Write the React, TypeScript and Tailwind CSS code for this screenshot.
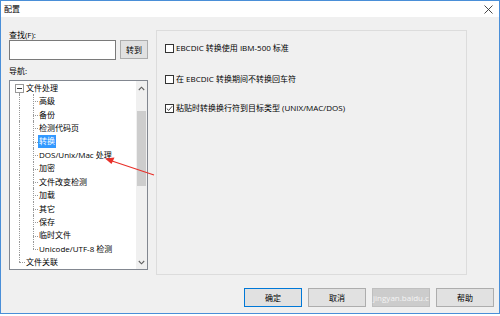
import React from "react";

const children = [
  "高级",
  "备份",
  "检测代码页",
  "转换",
  "DOS/Unix/Mac 处理",
  "加密",
  "文件改变检测",
  "加载",
  "其它",
  "保存",
  "临时文件",
  "Unicode/UTF-8 检测",
];

function Checkbox({ checked }: { checked?: boolean }) {
  return (
    <span className="w-[9px] h-[9px] border border-[#333] bg-white flex items-center justify-center shrink-0">
      {checked && (
        <svg width="7" height="7" viewBox="0 0 7 7">
          <path d="M0.8 3.6 L2.7 5.4 L6.2 1.2" fill="none" stroke="#333" strokeWidth="0.9" />
        </svg>
      )}
    </span>
  );
}

function Btn({ label, focus, dim }: { label: string; focus?: boolean; dim?: boolean }) {
  return (
    <div
      className={`w-[58px] h-[19px] flex items-center justify-center border ${
        focus
          ? "border-[#0078d7] bg-[#e1e1e1]"
          : dim
          ? "border-[#bfbfbf] bg-[#cccccc] text-[#f4f4f4]"
          : "border-[#adadad] bg-[#e1e1e1]"
      }`}
    >
      {label}
    </div>
  );
}

export default function App() {
  return (
    <div className="w-[500px] h-[316px] bg-white relative overflow-hidden font-['Open_Sans','Noto_Sans_CJK_SC',sans-serif] text-[8px] leading-none text-black">
      <div className="h-[314px] border border-[#4a8fd8] flex flex-col">
        {/* Title bar */}
        <div className="h-[16px] bg-white flex items-center justify-between pl-[3px] pr-[6px]">
          <span>配置</span>
          <svg width="9" height="9" viewBox="0 0 9 9">
            <path d="M0.5 0.5 L8.5 8.5 M8.5 0.5 L0.5 8.5" stroke="#333" strokeWidth="0.9" />
          </svg>
        </div>

        {/* Body */}
        <div className="flex-1 bg-[#f0f0f0] flex flex-col">
          <div className="flex pt-[13px] pl-[8px]">
            {/* Left column */}
            <div className="w-[139px] flex flex-col">
              <div className="h-[10px] flex items-center">查找(F):</div>
              <div className="flex gap-[4px]">
                <div className="w-[107px] h-[20px] bg-white border border-[#7a7a7a]" />
                <div className="w-[28px] h-[19px] bg-[#e1e1e1] border border-[#adadad] flex items-center justify-center">
                  转到
                </div>
              </div>
              <div className="h-[10px] mt-[6px] flex items-center">导航:</div>
              <div className="mt-[4px] h-[190px] bg-white border border-[#828790] flex">
                <div className="flex-1 flex flex-col">
                  <div className="h-[13.5px] relative flex items-center">
                    <span className="absolute left-[5px] top-[2.5px] w-[9px] h-[9px] border border-[#999] bg-white flex items-center justify-center">
                      <span className="w-[5px] h-px bg-[#333]" />
                    </span>
                    <span className="absolute left-[9px] top-[11.5px] bottom-0 border-l border-dotted border-[#999]" />
                    <span className="ml-[16px]">文件处理</span>
                  </div>
                  {children.map((c, i) => {
                    const last = i === children.length - 1;
                    const sel = c === "转换";
                    return (
                      <div key={c} className="h-[13.5px] relative flex items-center">
                        <span className="absolute left-[9px] top-0 bottom-0 border-l border-dotted border-[#999]" />
                        <span
                          className={`absolute left-[23px] top-0 border-l border-dotted border-[#999] ${
                            last ? "h-[7px]" : "bottom-0"
                          }`}
                        />
                        <span className="absolute left-[23px] w-[5px] top-[7px] border-t border-dotted border-[#999]" />
                        <span
                          className={`ml-[28px] px-[1px] py-[2.5px] ${sel ? "bg-[#3399ff] text-white" : ""}`}
                        >
                          {c}
                        </span>
                      </div>
                    );
                  })}
                  <div className="h-[13.5px] relative flex items-center">
                    <span className="absolute left-[9px] top-0 h-[7px] border-l border-dotted border-[#999]" />
                    <span className="absolute left-[9px] w-[6px] top-[7px] border-t border-dotted border-[#999]" />
                    <span className="ml-[16px]">文件关联</span>
                  </div>
                </div>
                {/* Scrollbar */}
                <div className="w-[11px] bg-[#f0f0f0] flex flex-col items-center">
                  <div className="h-[14px] flex items-center justify-center">
                    <svg width="7" height="5" viewBox="0 0 7 5">
                      <path d="M0.8 4 L3.5 1.2 L6.2 4" fill="none" stroke="#606060" strokeWidth="1.1" />
                    </svg>
                  </div>
                  <div className="mt-[16px] w-[9px] h-[75px] bg-[#cdcdcd]" />
                  <div className="flex-1" />
                  <div className="h-[14px] flex items-center justify-center">
                    <svg width="7" height="5" viewBox="0 0 7 5">
                      <path d="M0.8 1 L3.5 3.8 L6.2 1" fill="none" stroke="#606060" strokeWidth="1.1" />
                    </svg>
                  </div>
                </div>
              </div>
            </div>

            {/* Right panel */}
            <div className="ml-[8px] w-[311px] h-[245px] border border-[#dcdcdc] flex flex-col pl-[8px]">
              <div className="mt-[12px] h-[10px] flex items-center gap-[2px]">
                <Checkbox />
                <span>EBCDIC 转换使用 IBM-500 标准</span>
              </div>
              <div className="mt-[21px] h-[10px] flex items-center gap-[2px]">
                <Checkbox />
                <span>在 EBCDIC 转换期间不转换回车符</span>
              </div>
              <div className="mt-[19px] h-[10px] flex items-center gap-[2px]">
                <Checkbox checked />
                <span>粘贴时转换换行符到目标类型 (UNIX/MAC/DOS)</span>
              </div>
            </div>
          </div>

          {/* Buttons */}
          <div className="flex justify-end gap-[6px] pr-[5px] mt-[13px]">
            <Btn label="确定" focus />
            <Btn label="取消" />
            <Btn label="jingyan.baidu.c" dim />
            <Btn label="帮助" />
          </div>
        </div>
      </div>

      {/* Red annotation arrow */}
      <svg className="absolute left-0 top-0 pointer-events-none" width="500" height="316">
        <line x1="154" y1="175" x2="112" y2="161" stroke="#e8302a" strokeWidth="1.3" />
        <path d="M105 158.5 L114.5 157.5 L111.5 164 Z" fill="#e8302a" />
      </svg>
    </div>
  );
}
